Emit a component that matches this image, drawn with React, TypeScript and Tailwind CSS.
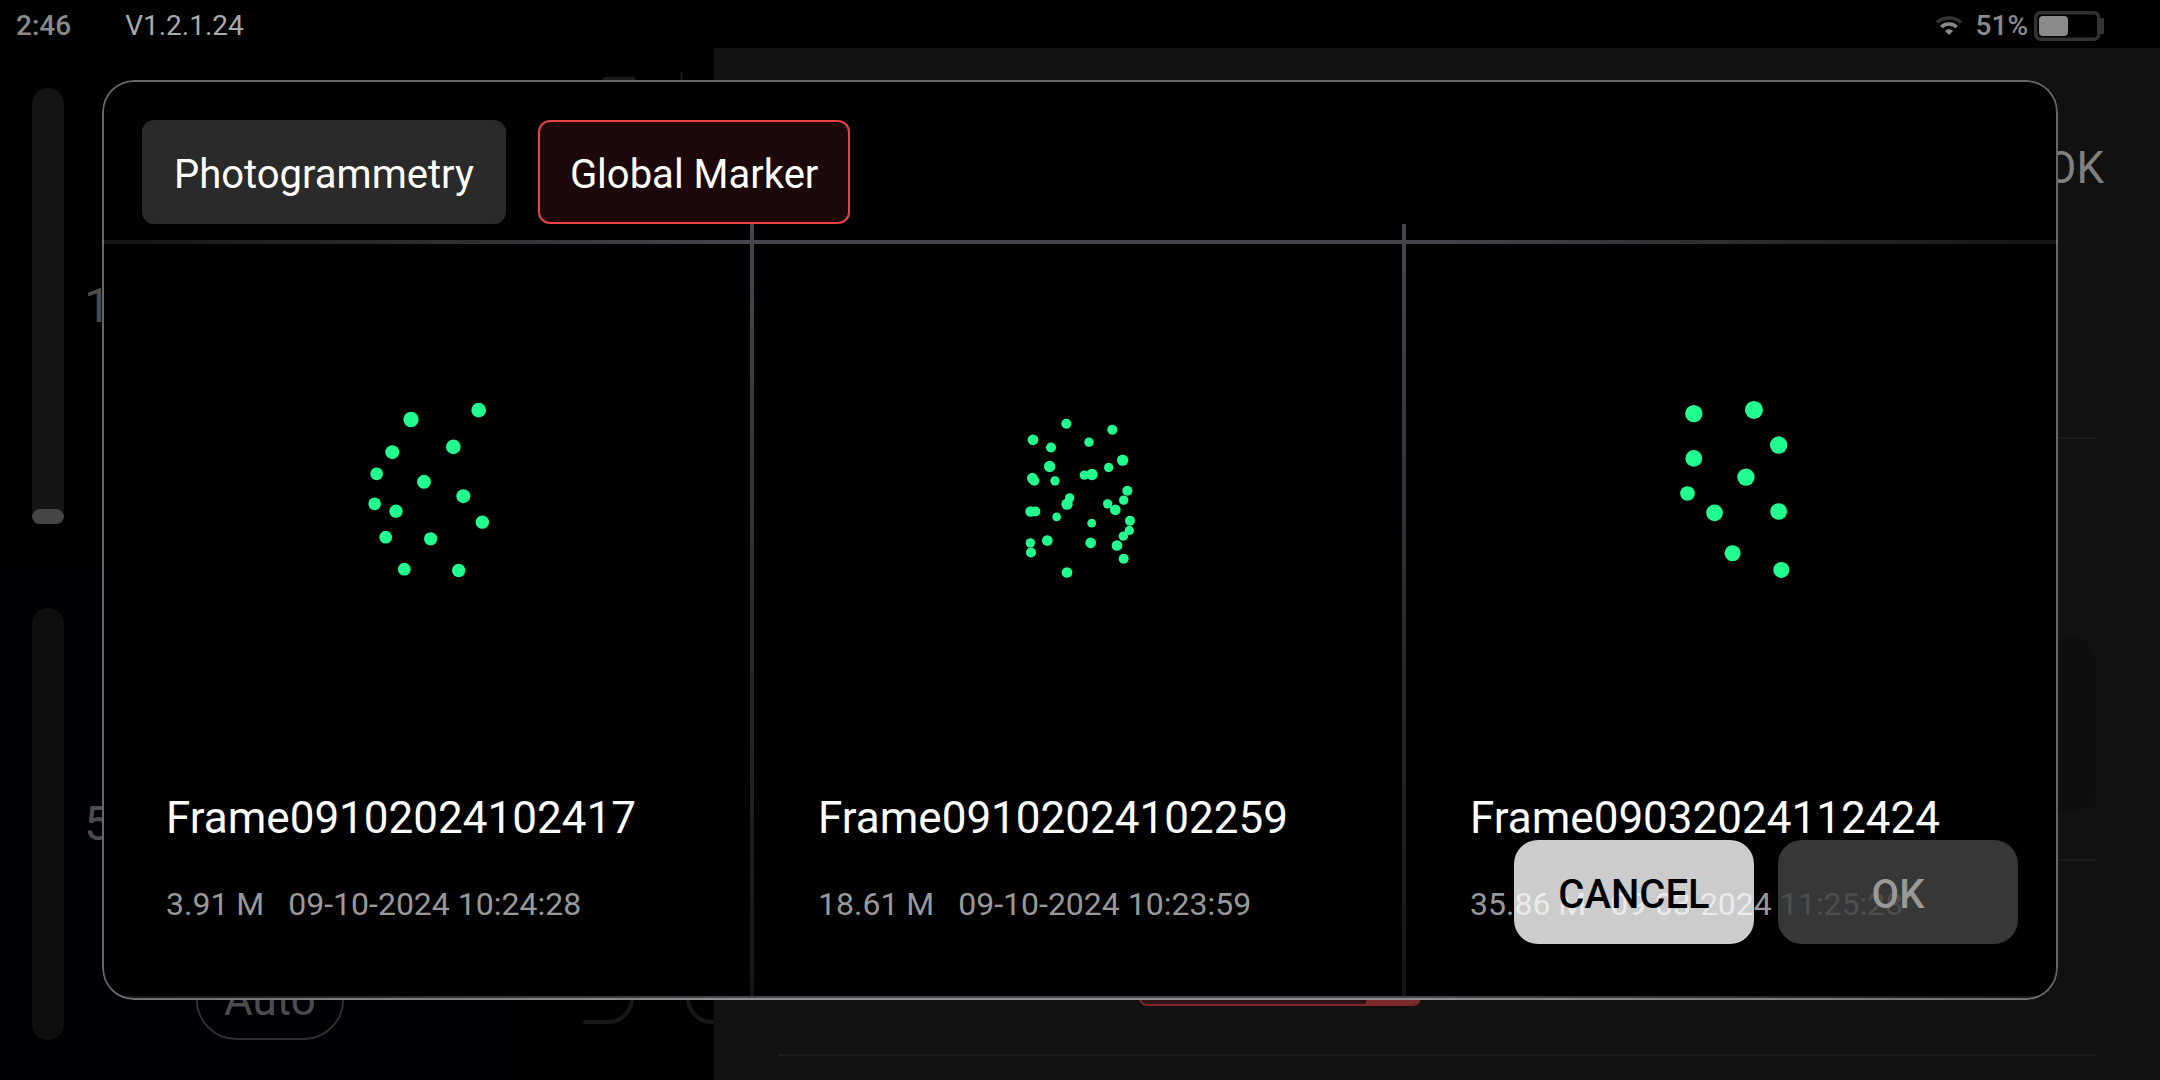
import React, { useState } from 'react';
import clsx from 'clsx';

type Point = [x: number, y: number, r: number];

interface Frame {
  name: string;
  size: string;
  date: string;
  origin: string;
  points: Point[];
}

const FRAMES: Frame[] = [
  {
    name: 'Frame09102024102417',
    size: '3.91 M',
    date: '09-10-2024 10:24:28',
    origin: 'translate(714 467)',
    points: [
      [213, 118, 23], [416, 90, 22], [340, 200, 22], [157, 216, 21], [110, 281, 19],
      [252, 305, 21], [370, 348, 21], [104, 371, 19], [168, 393, 20], [427, 426, 20],
      [137, 471, 19], [272, 476, 20], [193, 567, 19], [356, 571, 20],
    ],
  },
  {
    name: 'Frame09102024102259',
    size: '18.61 M',
    date: '09-10-2024 10:23:59',
    origin: 'translate(738 527)',
    points: [
      [199, 71, 15], [337, 89, 15], [99, 119, 16], [267, 126, 14], [153, 142, 15],
      [368, 180, 17], [149, 199, 17], [326, 202, 14], [253, 225, 14], [276, 223, 17],
      [97, 234, 16], [103, 242, 15], [165, 242, 14], [382, 272, 15], [209, 293, 14],
      [371, 300, 14], [201, 312, 17], [323, 311, 14], [346, 329, 16], [92, 334, 16],
      [106, 334, 15], [170, 350, 13], [390, 362, 15], [275, 369, 13], [388, 391, 14],
      [370, 408, 14], [142, 421, 16], [91, 428, 14], [272, 428, 16], [351, 436, 16],
      [93, 457, 15], [371, 476, 15], [201, 517, 16],
    ],
  },
  {
    name: 'Frame09032024112424',
    size: '35.86 M',
    date: '09-03-2024 11:25:28',
    origin: 'translate(730 466)',
    points: [
      [132, 102, 26], [312, 91, 27], [386, 196, 26], [132, 236, 25], [288, 292, 26],
      [113, 341, 22], [194, 399, 25], [386, 395, 25], [248, 520, 24], [394, 570, 24],
    ],
  },
];

const TABS = ['Photogrammetry', 'Global Marker'];

const WifiIcon: React.FC = () => (
  <svg width="26" height="20" viewBox="0 0 26 20" fill="none" aria-hidden="true">
    <path d="M1 6.600C7.500 .4 18.500 .4 25 6.600" stroke="#333333" strokeWidth="3.400" />
    <path d="M5.200 11C9.500 7 16.500 7 20.800 11" stroke="#8a8a8a" strokeWidth="3.400" />
    <path d="M13 19l-4-4c2.200-2.200 5.800-2.200 8 0z" fill="#8a8a8a" />
  </svg>
);

const BatteryIcon: React.FC = () => (
  <svg width="70" height="30" viewBox="0 0 70 30" fill="none" aria-hidden="true">
    <rect x="1.750" y="1.750" width="63" height="26.500" rx="5" stroke="#333333" strokeWidth="3.500" />
    <rect x="5" y="5" width="29" height="20" rx="4" fill="#8a8a8a" />
    <rect x="66" y="7" width="4" height="16" fill="#333333" />
  </svg>
);

const StatusBar: React.FC = () => (
  <header className="h-12 shrink-0 flex items-center justify-between pl-4 pr-14 text-[28px] leading-8">
    <div className="flex items-center gap-[54px] pt-1">
      <span className="font-medium text-[#8a8a8a]">2:46</span>
      <span className="text-[#aaaaaa]">V1.2.1.24</span>
    </div>
    <div className="flex items-center pt-1">
      <WifiIcon />
      <span className="ml-3.5 mr-1.5 font-medium text-[#8a8a8a]">51%</span>
      <BatteryIcon />
    </div>
  </header>
);

const Capture: React.FC = () => (
  <section className="w-[714px] shrink-0 flex flex-col">
    <div className="h-[520px] shrink-0 flex justify-between pt-10 pl-8">
      <label className="h-[436px] flex items-center gap-5 text-5xl text-[#4c4c4c]">
        <input
          type="range"
          defaultValue={100}
          className="h-full w-8 appearance-none rounded-full bg-[#141414] [writing-mode:vertical-lr] [&::-webkit-slider-thumb]:appearance-none [&::-webkit-slider-thumb]:w-8 [&::-webkit-slider-thumb]:h-[15px] [&::-webkit-slider-thumb]:rounded-full [&::-webkit-slider-thumb]:bg-[#444444]"
        />
        1
      </label>
      <svg width="140" height="40" viewBox="0 0 140 40" className="-mt-6" fill="none" aria-hidden="true">
        <path d="M29 40V16a3 3 0 0 1 3-3h27a3 3 0 0 1 3 3v24" fill="#1c1c1c" />
        <path d="M107.500 8v32" stroke="#1c1c1c" strokeWidth="2" />
      </svg>
    </div>
    <div className="flex-1 min-h-0 flex items-stretch py-10 pl-8 bg-linear-to-r from-[#000004] from-70% to-black to-80%">
      <label className="w-[164px] flex items-center gap-5 text-5xl text-[#4c4c4c]">
        <input
          type="range"
          defaultValue={50}
          className="h-full w-8 appearance-none rounded-full bg-[#0f0f11] [writing-mode:vertical-lr] [&::-webkit-slider-thumb]:appearance-none [&::-webkit-slider-thumb]:opacity-0"
        />
        5
      </label>
      <button className="self-end w-[148px] h-20 rounded-[40px] border-2 border-[#2f2f2f] text-[44px] leading-[52px] text-[#4c4c4c]">
        Auto
      </button>
      <svg width="140" height="60" viewBox="0 0 140 60" className="self-end ml-auto mb-4" fill="none" aria-hidden="true">
        <path d="M11 58h23a24 24 0 0 0 24-24V0M114 0v34a24 24 0 0 0 24 24h2" stroke="#181818" strokeWidth="4" strokeLinecap="round" />
      </svg>
    </div>
  </section>
);

const Settings: React.FC = () => (
  <section className="flex-1 min-w-0 flex flex-col bg-[#111111]">
    <div className="h-[391px] shrink-0 mx-16 border-b-2 border-[#1c1c1c] pt-[94px] text-right">
      <button className="-mr-2 text-[44px] leading-[52px] text-[#808080]">OK</button>
    </div>
    <div className="h-[422px] shrink-0 mx-16 border-b-2 border-[#1c1c1c] pt-[199px]">
      <div className="h-[173px] rounded-3xl bg-[#0e0e0e]" />
    </div>
    <div className="h-[195px] shrink-0 mx-16 border-b-2 border-[#1c1c1c] pt-[65px] pl-[361px]">
      <div className="w-[282px] h-20 flex justify-end rounded-lg overflow-hidden border-2 border-[#822526] bg-[#2c1414]">
        <svg width="54" height="76" viewBox="0 0 54 76" aria-hidden="true">
          <path d="M54 0v76H0L40 0z" fill="#7a2d2d" />
        </svg>
      </div>
    </div>
  </section>
);

const PointCloud: React.FC<{ frame: Frame }> = ({ frame }) => (
  <svg
    className="w-full flex-1 min-h-0"
    viewBox="0 0 1944 1701"
    preserveAspectRatio="xMinYMid meet"
    role="img"
    aria-label={frame.name}
  >
    <g transform={frame.origin} fill="#21ff8f">
      {frame.points.map(([x, y, r]) => (
        <circle key={`${x}-${y}`} cx={x} cy={y} r={r} />
      ))}
    </g>
  </svg>
);

const FrameCard: React.FC<{ frame: Frame; divider: boolean }> = ({ frame, divider }) => (
  <li className="min-w-0 min-h-0 flex">
    <div className="flex-1 min-w-0 flex flex-col pb-[72px]">
      <PointCloud frame={frame} />
      <p className="pl-16 text-[44px] leading-[52px] text-white">{frame.name}</p>
      <p className="pl-16 mt-10 flex gap-6 text-[32px] leading-10 text-[#999999]">
        <span>{frame.size}</span>
        <span>{frame.date}</span>
      </p>
    </div>
    {divider && <div className="w-1 bg-linear-to-b from-[#46454b] to-[#141414]" />}
  </li>
);

const Rule: React.FC<{ className?: string }> = ({ className }) => (
  <div
    className={clsx(
      'h-1 shrink-0 bg-[linear-gradient(to_right,#141414,#46454b_33%,#46454b_67%,#141414)]',
      className,
    )}
  />
);

const App: React.FC = () => {
  const [tab, setTab] = useState('Global Marker');

  return (
    <div className="relative h-screen flex flex-col overflow-hidden bg-black font-[Roboto,sans-serif]">
      <StatusBar />
      <main className="flex-1 min-h-0 flex">
        <Capture />
        <Settings />
      </main>

      {/* Import dialog */}
      <div className="absolute inset-0 flex px-[102px] py-20">
        <div role="dialog" className="relative flex-1 min-w-0 flex flex-col rounded-[32px] overflow-hidden bg-black">
          <div className="flex gap-8 pt-10 px-10">
            {TABS.map((t) => (
              <button
                key={t}
                onClick={() => setTab(t)}
                className={clsx(
                  'h-[104px] px-[30px] pt-1.5 rounded-xl border-2 text-[40px] leading-[48px] text-white',
                  t === tab ? 'border-[#e84444] bg-[#1c080a]' : 'border-[#2a2a2a] bg-[#2a2a2a]',
                )}
              >
                {t}
              </button>
            ))}
          </div>
          <Rule className="mt-4" />
          <ul className="flex-1 min-h-0 -mt-5 grid grid-cols-3">
            {FRAMES.map((f, i) => (
              <FrameCard key={f.name} frame={f} divider={i < FRAMES.length - 1} />
            ))}
          </ul>
          <Rule />

          {/* Translucent, so the last card's caption shows through */}
          <div className="absolute right-10 bottom-14 flex gap-6">
            <button className="w-60 h-[104px] pt-1.5 rounded-3xl bg-white/80 text-[40px] font-medium text-black">
              CANCEL
            </button>
            <button className="w-60 h-[104px] pt-1.5 rounded-3xl bg-[#414141]/85 text-[40px] font-medium text-[#999999]">
              OK
            </button>
          </div>
          <div className="absolute inset-0 rounded-[32px] border-2 border-white/40 pointer-events-none" />
        </div>
      </div>
    </div>
  );
};

export default App;
